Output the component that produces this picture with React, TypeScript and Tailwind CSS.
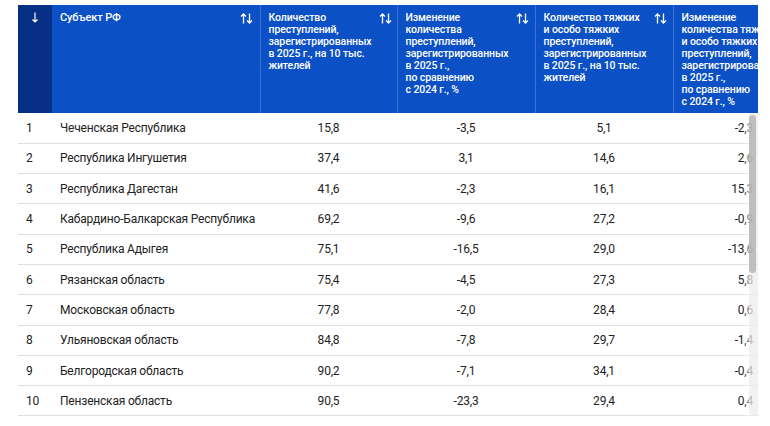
import React from "react";

type Row = {
  n: number;
  name: string;
  total: string;
  totalDiff: string;
  grave: string;
  graveDiff: string;
};

const rows: Row[] = [
  { n: 1, name: "Чеченская Республика", total: "15,8", totalDiff: "-3,5", grave: "5,1", graveDiff: "-2,3" },
  { n: 2, name: "Республика Ингушетия", total: "37,4", totalDiff: "3,1", grave: "14,6", graveDiff: "2,6" },
  { n: 3, name: "Республика Дагестан", total: "41,6", totalDiff: "-2,3", grave: "16,1", graveDiff: "15,3" },
  { n: 4, name: "Кабардино-Балкарская Республика", total: "69,2", totalDiff: "-9,6", grave: "27,2", graveDiff: "-0,9" },
  { n: 5, name: "Республика Адыгея", total: "75,1", totalDiff: "-16,5", grave: "29,0", graveDiff: "-13,6" },
  { n: 6, name: "Рязанская область", total: "75,4", totalDiff: "-4,5", grave: "27,3", graveDiff: "5,8" },
  { n: 7, name: "Московская область", total: "77,8", totalDiff: "-2,0", grave: "28,4", graveDiff: "0,6" },
  { n: 8, name: "Ульяновская область", total: "84,8", totalDiff: "-7,8", grave: "29,7", graveDiff: "-1,4" },
  { n: 9, name: "Белгородская область", total: "90,2", totalDiff: "-7,1", grave: "34,1", graveDiff: "-0,4" },
  { n: 10, name: "Пензенская область", total: "90,5", totalDiff: "-23,3", grave: "29,4", graveDiff: "0,4" },
];

// two little arrows used on every sortable column
function SortIcon() {
  return (
    <svg width="13" height="11" viewBox="0 0 13 11" fill="none" stroke="white" strokeWidth="1.3" className="shrink-0">
      <path d="M3.5 10.5V1M1 3.5L3.5 1L6 3.5" />
      <path d="M9.5 0.5V10M7 7.5L9.5 10L12 7.5" />
    </svg>
  );
}

function HeadCell({ lines }: { lines: string[] }) {
  return (
    <th className="align-top border-l border-[#3d72d4] pl-2 pr-[7px] pt-[7px] text-left font-medium">
      <div className="flex justify-between gap-2">
        <div className="leading-[12px] whitespace-nowrap">
          {lines.map((l, i) => (
            <div key={i}>{l}</div>
          ))}
        </div>
        <div className="pt-[1px]">
          <SortIcon />
        </div>
      </div>
    </th>
  );
}

export default function App() {
  return (
    <div className="min-h-screen bg-white pl-[18px] pt-[5px] font-['Roboto',sans-serif]">
      <div className="relative w-[740px] overflow-hidden">
        <table className="table-fixed border-collapse w-[792px]">
          <colgroup>
            <col className="w-[34px]" />
            <col className="w-[208px]" />
            <col className="w-[137px]" />
            <col className="w-[138px]" />
            <col className="w-[138px]" />
            <col className="w-[137px]" />
          </colgroup>
          <thead>
            <tr className="h-[108px] bg-[#0b50c4] text-[10.5px] tracking-[-0.1px] text-white">
              <th className="align-top bg-[#062f85] pt-[7px] font-normal">
                <svg width="8" height="11" viewBox="0 0 8 11" fill="none" stroke="white" strokeWidth="1.2" className="mx-auto">
                  <path d="M4 0.5V10M1.5 7.5L4 10L6.5 7.5" />
                </svg>
              </th>
              <th className="align-top pl-2 pr-[7px] pt-[7px] text-left font-medium">
                <div className="flex justify-between">
                  <span className="leading-[12px] text-[11px]">Субъект РФ</span>
                  <div className="pt-[1px]">
                    <SortIcon />
                  </div>
                </div>
              </th>
              <HeadCell lines={["Количество", "преступлений,", "зарегистрированных", "в 2025 г., на 10 тыс.", "жителей"]} />
              <HeadCell
                lines={["Изменение", "количества", "преступлений,", "зарегистрированных", "в 2025 г.,", "по сравнению", "с 2024 г., %"]}
              />
              <HeadCell
                lines={["Количество тяжких", "и особо тяжких", "преступлений,", "зарегистрированных", "в 2025 г., на 10 тыс.", "жителей"]}
              />
              <HeadCell
                lines={[
                  "Изменение",
                  "количества тяжких",
                  "и особо тяжких",
                  "преступлений,",
                  "зарегистрированных",
                  "в 2025 г.,",
                  "по сравнению",
                  "с 2024 г., %",
                ]}
              />
            </tr>
          </thead>
          <tbody className="text-[12px] tracking-[-0.2px] text-[#222]">
            {rows.map((r) => (
              <tr key={r.n} className="h-[30.3px] border-b border-[#dedede]">
                <td className="pl-2">{r.n}</td>
                <td className="px-2 whitespace-nowrap">{r.name}</td>
                <td className="text-center">{r.total}</td>
                <td className="text-center">{r.totalDiff}</td>
                <td className="text-center">{r.grave}</td>
                <td className="pr-[57px] text-right">{r.graveDiff}</td>
              </tr>
            ))}
          </tbody>
        </table>
        {/* scrollbar over the right edge of the body */}
        <div className="absolute right-[9px] top-[108px] bottom-0 w-[6px] bg-gradient-to-r from-white/0 to-white/50" />
        <div className="absolute right-0 top-[108px] bottom-0 w-[9px] bg-[#ececec]/75" />
        <div className="absolute right-[2px] top-[110px] h-[158px] w-[7px] rounded-full bg-[#a9a9a9]/70" />
      </div>
    </div>
  );
}
